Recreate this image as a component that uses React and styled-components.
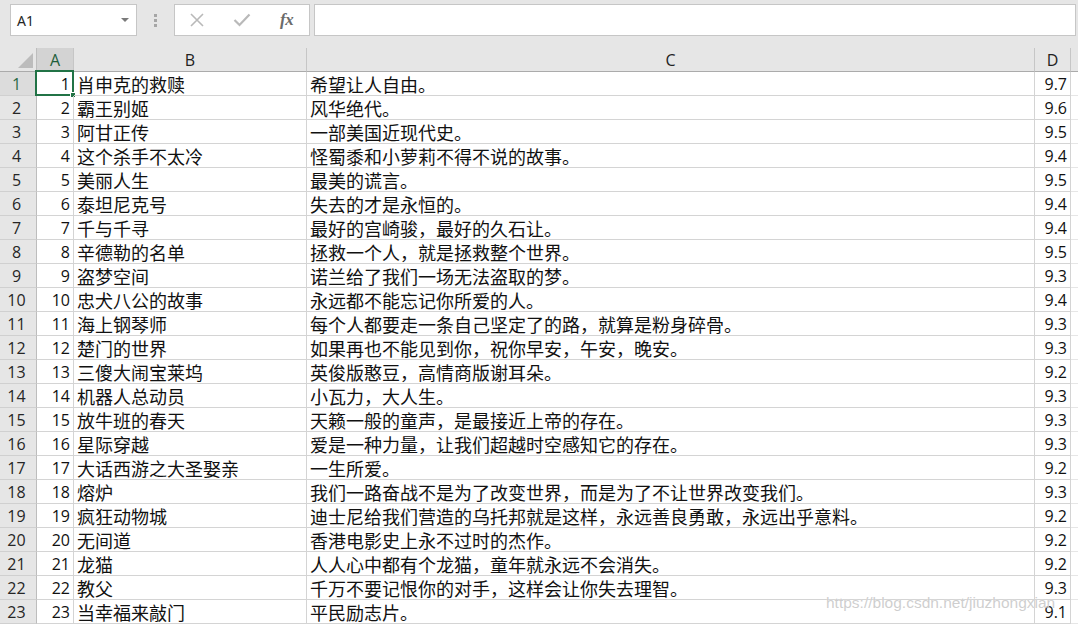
import React from "react";
import styled, { createGlobalStyle } from "styled-components";

const Global = createGlobalStyle`
  html, body { margin: 0; padding: 0; background: #ffffff; overflow: hidden; }
  * { box-sizing: border-box; }
`;

const data = [
  ["肖申克的救赎", "希望让人自由。", "9.7"],
  ["霸王别姬", "风华绝代。", "9.6"],
  ["阿甘正传", "一部美国近现代史。", "9.5"],
  ["这个杀手不太冷", "怪蜀黍和小萝莉不得不说的故事。", "9.4"],
  ["美丽人生", "最美的谎言。", "9.5"],
  ["泰坦尼克号", "失去的才是永恒的。", "9.4"],
  ["千与千寻", "最好的宫崎骏，最好的久石让。", "9.4"],
  ["辛德勒的名单", "拯救一个人，就是拯救整个世界。", "9.5"],
  ["盗梦空间", "诺兰给了我们一场无法盗取的梦。", "9.3"],
  ["忠犬八公的故事", "永远都不能忘记你所爱的人。", "9.4"],
  ["海上钢琴师", "每个人都要走一条自己坚定了的路，就算是粉身碎骨。", "9.3"],
  ["楚门的世界", "如果再也不能见到你，祝你早安，午安，晚安。", "9.3"],
  ["三傻大闹宝莱坞", "英俊版憨豆，高情商版谢耳朵。", "9.2"],
  ["机器人总动员", "小瓦力，大人生。", "9.3"],
  ["放牛班的春天", "天籁一般的童声，是最接近上帝的存在。", "9.3"],
  ["星际穿越", "爱是一种力量，让我们超越时空感知它的存在。", "9.3"],
  ["大话西游之大圣娶亲", "一生所爱。", "9.2"],
  ["熔炉", "我们一路奋战不是为了改变世界，而是为了不让世界改变我们。", "9.3"],
  ["疯狂动物城", "迪士尼给我们营造的乌托邦就是这样，永远善良勇敢，永远出乎意料。", "9.2"],
  ["无间道", "香港电影史上永不过时的杰作。", "9.2"],
  ["龙猫", "人人心中都有个龙猫，童年就永远不会消失。", "9.2"],
  ["教父", "千万不要记恨你的对手，这样会让你失去理智。", "9.3"],
  ["当幸福来敲门", "平民励志片。", "9.1"],
];

const Page = styled.div`
  position: relative;
  width: 1078px;
  height: 625px;
  background: #e6e6e6;
  display: flex;
  flex-direction: column;
  overflow: hidden;
`;

const Toolbar = styled.div`
  height: 48px;
  display: flex;
  align-items: flex-start;
  padding: 4px 2px 0 10px;
  background: #e6e6e6;
  font-family: "Noto Sans", "Liberation Sans", sans-serif;
`;

const NameBox = styled.div`
  width: 127px;
  height: 32px;
  background: #ffffff;
  border: 1px solid #c6c6c6;
  display: flex;
  align-items: center;
  justify-content: space-between;
  padding: 0 7px 0 6px;
  font-size: 14px;
  color: #262626;
`;

const Caret = styled.span`
  width: 0;
  height: 0;
  border-left: 4px solid transparent;
  border-right: 4px solid transparent;
  border-top: 4px solid #7a7a7a;
`;

const Grip = styled.div`
  width: 37px;
  height: 32px;
  display: flex;
  flex-direction: column;
  align-items: center;
  justify-content: center;
  gap: 2px;
`;

const Dot = styled.span`
  width: 3px;
  height: 3px;
  background: #a6a6a6;
`;

const FormulaButtons = styled.div`
  width: 136px;
  height: 32px;
  background: #ffffff;
  border: 1px solid #c6c6c6;
  display: flex;
  align-items: center;
`;

const IconSlot = styled.span`
  width: 45px;
  height: 30px;
  display: flex;
  align-items: center;
  justify-content: center;
`;

const Fx = styled.span`
  font-family: "Liberation Serif", "DejaVu Serif", serif;
  font-style: italic;
  font-weight: bold;
  font-size: 17px;
  color: #6b6b6b;
  letter-spacing: -0.5px;
`;

const FormulaInput = styled.div`
  flex: 1;
  height: 32px;
  margin-left: 4px;
  background: #ffffff;
  border: 1px solid #c6c6c6;
`;

const Sheet = styled.div`
  flex: 1;
  display: grid;
  grid-template-columns: 37px 37px 233px 728px 36px 1fr;
  grid-auto-rows: 24px;
  background: #ffffff;
`;

const Corner = styled.div`
  position: relative;
  background: #e6e6e6;
  border-right: 1px solid #bdbdbd;
  border-bottom: 1px solid #ababab;
`;

const CornerTri = styled.span`
  position: absolute;
  right: 3px;
  bottom: 3px;
  width: 0;
  height: 0;
  border-left: 15px solid transparent;
  border-bottom: 15px solid #bcbcbc;
`;

const ColHead = styled.div`
  background: ${(p) => (p.$active ? "#d3d3d3" : "#e6e6e6")};
  border-right: 1px solid #c6c6c6;
  border-bottom: 1px solid #ababab;
  display: flex;
  align-items: center;
  justify-content: center;
  padding-top: 1px;
  font-family: "Open Sans", "Liberation Sans", sans-serif;
  font-size: 16px;
  color: ${(p) => (p.$active ? "#1e5e3a" : "#222")};
`;

const RowHead = styled.div`
  background: ${(p) => (p.$active ? "#dcdcdc" : "#e6e6e6")};
  border-right: 1px solid #bdbdbd;
  border-bottom: 1px solid #d0d0d0;
  display: flex;
  align-items: center;
  justify-content: center;
  padding-right: 3px;
  font-family: "Open Sans", "Liberation Sans", sans-serif;
  font-size: 16px;
  color: ${(p) => (p.$active ? "#2a6a45" : "#262626")};
`;

const Cell = styled.div`
  position: relative;
  border-right: 1px solid #d4d4d4;
  border-bottom: 1px solid #d4d4d4;
  display: flex;
  align-items: center;
  justify-content: ${(p) => (p.$num ? "flex-end" : "flex-start")};
  padding: ${(p) => (p.$num ? "1px 3px 0 0" : "0 0 0 3px")};
  white-space: nowrap;
  overflow: visible;
  font-family: ${(p) =>
    p.$num
      ? `"Open Sans", "Liberation Sans", sans-serif`
      : `"Noto Sans CJK SC", "Noto Sans", sans-serif`};
  font-size: ${(p) => (p.$num ? "16px" : "18px")};
  color: #111;
  line-height: 1;
`;

const Filler = styled.div`
  background: #ffffff;
  border-bottom: 1px solid #e6e6e6;
`;

const HeadFiller = styled.div`
  background: #e6e6e6;
  border-bottom: 1px solid #ababab;
`;

const Selection = styled.span`
  position: absolute;
  left: -2px;
  top: -2px;
  right: -1px;
  bottom: -1px;
  border: 2px solid #217346;
  pointer-events: none;
`;

const Handle = styled.span`
  position: absolute;
  right: -4px;
  bottom: -4px;
  width: 6px;
  height: 6px;
  background: #217346;
  border: 1px solid #ffffff;
`;

const Watermark = styled.div`
  position: absolute;
  left: 826px;
  top: 594px;
  font-family: "Liberation Sans", Arial, sans-serif;
  font-size: 15.5px;
  color: rgba(190, 190, 190, 0.75);
  text-shadow: 0 0 1px rgba(255, 255, 255, 0.9);
  white-space: nowrap;
  pointer-events: none;
`;

const CancelIcon = () => (
  <svg width="16" height="16" viewBox="0 0 16 16">
    <path d="M2 2 L14 14 M14 2 L2 14" stroke="#b9b9b9" strokeWidth="1.6" fill="none" />
  </svg>
);

const CheckIcon = () => (
  <svg width="18" height="14" viewBox="0 0 18 14">
    <path d="M1.5 7 L6.5 12 L16.5 1.5" stroke="#b9b9b9" strokeWidth="2.2" fill="none" />
  </svg>
);

export default function App() {
  return (
    <>
      <Global />
      <Page>
        <Toolbar>
          <NameBox>
            <span>A1</span>
            <Caret />
          </NameBox>
          <Grip>
            <Dot />
            <Dot />
            <Dot />
          </Grip>
          <FormulaButtons>
            <IconSlot>
              <CancelIcon />
            </IconSlot>
            <IconSlot>
              <CheckIcon />
            </IconSlot>
            <IconSlot>
              <Fx>fx</Fx>
            </IconSlot>
          </FormulaButtons>
          <FormulaInput />
        </Toolbar>
        <Sheet>
          <Corner>
            <CornerTri />
          </Corner>
          <ColHead $active>A</ColHead>
          <ColHead>B</ColHead>
          <ColHead>C</ColHead>
          <ColHead>D</ColHead>
          <HeadFiller />
          {data.map((r, i) => (
            <React.Fragment key={i}>
              <RowHead $active={i === 0}>{i + 1}</RowHead>
              <Cell $num>
                {i + 1}
                {i === 0 && (
                  <Selection>
                    <Handle />
                  </Selection>
                )}
              </Cell>
              <Cell>{r[0]}</Cell>
              <Cell>{r[1]}</Cell>
              <Cell $num>{r[2]}</Cell>
              <Filler />
            </React.Fragment>
          ))}
        </Sheet>
        <Watermark>https://blog.csdn.net/jiuzhongxian</Watermark>
      </Page>
    </>
  );
}
